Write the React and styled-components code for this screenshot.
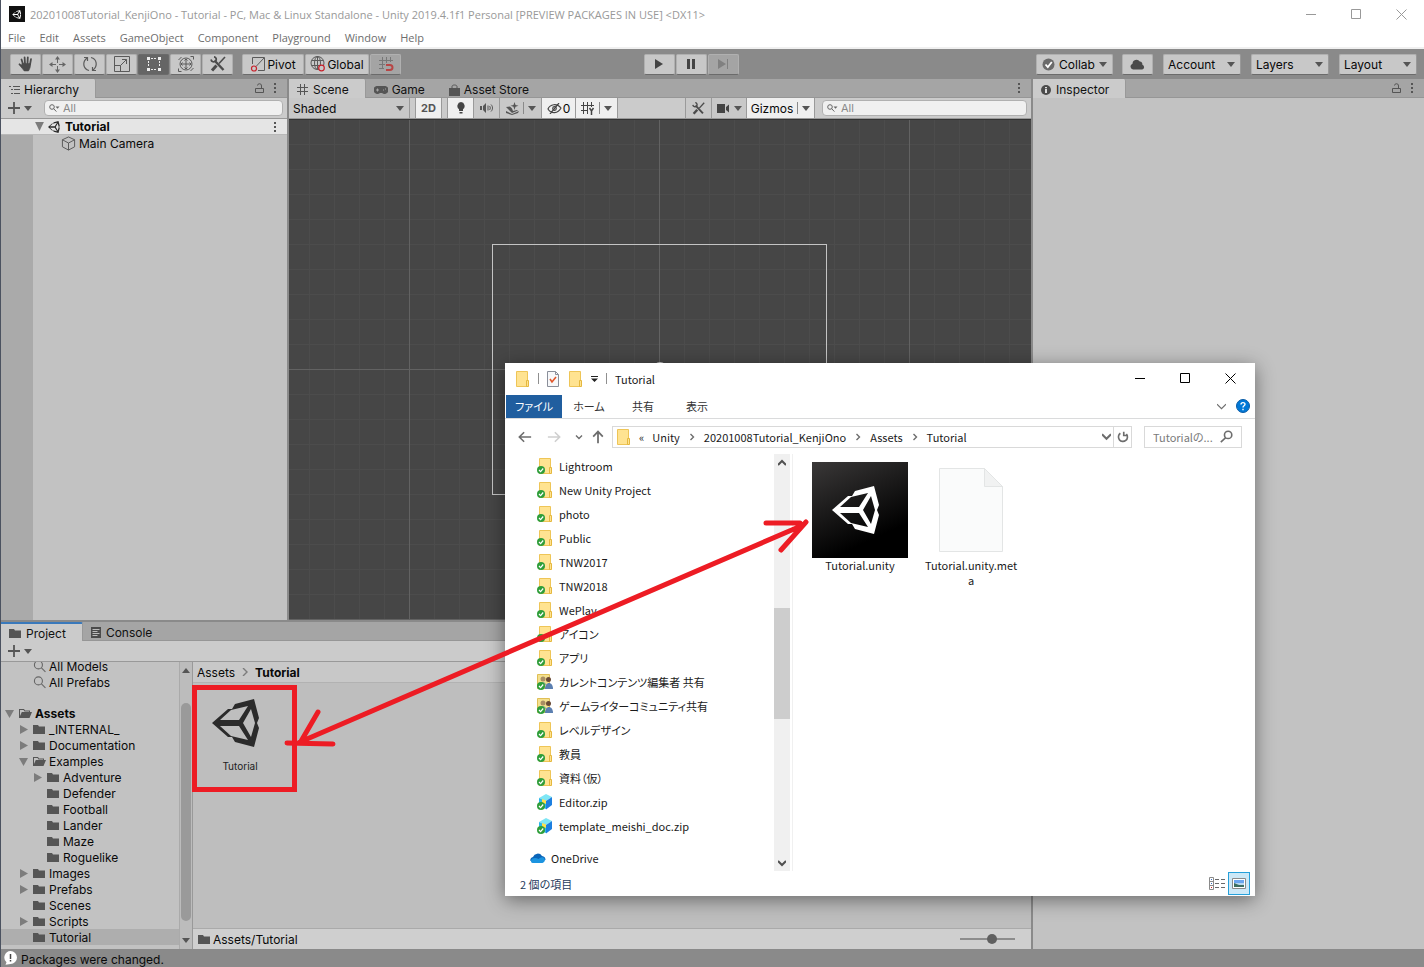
import React, { useState } from "react";
import styled, { createGlobalStyle } from "styled-components";

const GlobalStyle = createGlobalStyle`
  * {
    box-sizing: border-box;
  }
  body {
    margin: 0;
    overflow: hidden;
  }
  button, input, select {
    font: inherit;
    color: inherit;
    margin: 0;
  }
  button {
    padding: 0;
    border: none;
    background: none;
  }
  svg {
    display: block;
    flex-shrink: 0;
  }
`;

const Editor = styled.div`
  position: relative;
  display: flex;
  flex-direction: column;
  height: 100vh;
  overflow: hidden;
  border-left: 1px solid #4b5260;
  background: #8a8a8a;
  font-family: Inter, "Noto Sans CJK JP", sans-serif;
  font-size: 12px;
  color: #090909;
`;

/* ---------- title bar and menu ---------- */

const TitleBar = styled.header`
  display: flex;
  align-items: center;
  height: 28px;
  padding-left: 8px;
  background: #ffffff;
  color: #999999;
  font-family: "Open Sans", sans-serif;
  font-size: 11px;
`;

const TitleText = styled.span`
  flex: 1;
  padding-left: 5px;
  white-space: nowrap;
`;

const AppBadge = styled.span`
  display: grid;
  place-items: center;
  width: 16px;
  height: 16px;
  background: #111111;
`;

const WindowButton = styled.button`
  display: grid;
  place-items: center;
  width: 45px;
  height: ${(props) => props.$height || 28}px;
  color: ${(props) => props.$color || "#999999"};
`;

const MenuBar = styled.nav`
  display: flex;
  align-items: center;
  gap: 14px;
  height: 21px;
  padding: 0 7px;
  background: #ffffff;
  border-bottom: 2px solid #f0f0f0;
  font-family: "Open Sans", sans-serif;
  font-size: 11px;
  color: #6d6d6d;
`;

const MenuItem = styled.button`
  line-height: 18px;
`;

/* ---------- main toolbar ---------- */

const Toolbar = styled.div`
  display: flex;
  align-items: center;
  height: 30px;
  padding: 0 7px 0 9px;
  background: #8a8a8a;
`;

const ButtonGroup = styled.div`
  display: flex;
  gap: 1px;
  margin-right: ${(props) => props.$after || 0}px;
`;

const ToolButton = styled.button`
  display: flex;
  align-items: center;
  justify-content: center;
  gap: ${(props) => props.$gap || 1}px;
  width: ${(props) => props.$width || 31}px;
  height: 21px;
  border: 1px solid ${(props) => (props.$active ? "#6a6a6a" : "#b0b0b0")};
  border-bottom-color: #6b6b6b;
  border-radius: 2px;
  background: ${(props) => (props.$active ? "#656565" : props.$dim ? "#a4a4a4" : "#c8c8c8")};
  color: ${(props) => (props.$active ? "#f0f0f0" : "#090909")};
`;

const CloudButton = styled(ToolButton)`
  margin-left: 9px;
`;

const Spacer = styled.div`
  flex: ${(props) => props.$grow || 1};
`;

const SelectBox = styled.label`
  position: relative;
  display: flex;
  align-items: center;
  width: ${(props) => props.$width}px;
  height: ${(props) => (props.$flat ? 20 : 21)}px;
  margin-left: ${(props) => (props.$flat ? 0 : 10)}px;
  border: ${(props) => (props.$flat ? "none" : "1px solid #b0b0b0")};
  border-bottom: ${(props) => (props.$flat ? "none" : "1px solid #6b6b6b")};
  border-right: 1px solid #999999;
  border-radius: ${(props) => (props.$flat ? 0 : 2)}px;
  background: #c8c8c8;

  select {
    width: 100%;
    height: 100%;
    padding: 0 16px 0 4px;
    border: none;
    background: none;
    appearance: none;
  }
  svg {
    position: absolute;
    right: 5px;
    pointer-events: none;
  }
`;

/* ---------- panels ---------- */

const Workspace = styled.main`
  display: flex;
  flex: 1;
  gap: 2px;
  min-height: 0;
  background: #8a8a8a;
`;

const LeftColumn = styled.div`
  display: flex;
  flex: 1030;
  flex-direction: column;
  gap: 2px;
  min-width: 0;
`;

const UpperRow = styled.div`
  display: flex;
  flex: 541;
  gap: 2px;
  min-height: 0;
`;

const Panel = styled.section`
  display: flex;
  flex: ${(props) => props.$grow || 1};
  flex-direction: column;
  min-width: 0;
  min-height: 0;
  overflow: hidden;
  background: #c2c2c2;
`;

const TabStrip = styled.div`
  display: flex;
  align-items: center;
  height: 19px;
  flex-shrink: 0;
  padding-right: 4px;
  border-bottom: 1px solid #969696;
  background: #a5a5a5;
`;

const Tab = styled.button`
  display: flex;
  align-items: center;
  gap: 4px;
  height: 19px;
  margin-bottom: -1px;
  padding: 2px 16px 0 8px;
  white-space: nowrap;
  color: #111111;
  background: ${(props) => (props.$active ? "#cbcbcb" : "none")};
  border-right: ${(props) => (props.$active ? "1px solid #999999" : "none")};
  border-top: ${(props) => (props.$focused ? "2px solid #3a79bb" : "none")};
  border-radius: 0 2px 0 0;
`;

const IconButton = styled.button`
  display: grid;
  place-items: center;
  width: 16px;
  height: 16px;
  color: #555555;
`;

const PanelBar = styled.div`
  display: flex;
  align-items: center;
  height: 21px;
  flex-shrink: 0;
  border-bottom: 1px solid #999999;
  background: #cbcbcb;
`;

const AddButton = styled.button`
  display: flex;
  align-items: center;
  gap: 4px;
  width: 36px;
  padding-left: 7px;
  color: #555555;
`;

const SearchBox = styled.label`
  display: flex;
  align-items: center;
  gap: 3px;
  flex: 1;
  min-width: 0;
  max-width: 240px;
  height: 16px;
  margin: 0 4px 0 7px;
  padding-left: 4px;
  border: 1px solid #b0b0b0;
  border-radius: 4px;
  background: #f0f0f0;
  color: #5a5a5a;

  input {
    flex: 1;
    min-width: 0;
    padding: 0;
    border: none;
    outline: none;
    background: none;
    font-size: 11px;
    line-height: 14px;
  }
  input::placeholder {
    color: #888888;
    opacity: 1;
  }
`;

/* ---------- hierarchy ---------- */

const HierarchyBody = styled.div`
  flex: 1;
  background: linear-gradient(to right, #aaaaaa 32px, #c2c2c2 32px);
`;

const SceneRow = styled.div`
  display: flex;
  align-items: center;
  gap: 4px;
  height: 16px;
  padding: 0 4px 0 33px;
  border-bottom: 1px solid #b8b8b8;
  background: #e5e5e5;
  font-weight: 700;

  span {
    flex: 1;
  }
`;

const ObjectRow = styled.div`
  display: flex;
  align-items: center;
  gap: 3px;
  height: 16px;
  padding-left: 60px;
`;

/* ---------- scene ---------- */

const SceneButton = styled.button`
  display: flex;
  align-items: center;
  justify-content: center;
  gap: 4px;
  width: ${(props) => props.$width}px;
  height: 20px;
  margin-left: ${(props) => props.$before || 0}px;
  border-right: 1px solid #9a9a9a;
  border-left: ${(props) => (props.$before ? "1px solid #9a9a9a" : "none")};
  background: ${(props) => (props.$on ? "#efefef" : "#c8c8c8")};
  color: ${(props) => (props.$text ? "#090909" : "#555555")};
`;

const Divider = styled.i`
  width: 1px;
  height: 12px;
  background: #8a8a8a;
`;

const TwoD = styled.span`
  font-size: 11px;
  font-weight: 700;
`;

const ZeroCount = styled.span`
  margin-left: -3px;
`;

const SceneSearch = styled(SearchBox)`
  flex: 0 1 205px;
`;

const SceneCanvas = styled.div`
  flex: 1;
  min-height: 0;
  overflow: hidden;
  border-top: 1px solid #333333;
  background-color: #464646;
  background-image:
    linear-gradient(to right, #626262 1px, transparent 1px),
    linear-gradient(to bottom, #626262 1px, transparent 1px),
    linear-gradient(to right, #4c4c4c 1px, transparent 1px),
    linear-gradient(to bottom, #4c4c4c 1px, transparent 1px);
  background-size: 250px 250px, 250px 250px, 25px 25px, 25px 25px;
  background-position: 120px 0, 0 -1px, 20px 0, 0 -1px;
`;

/* ---------- project ---------- */

const ProjectBody = styled.div`
  display: flex;
  flex: 1;
  min-height: 0;
`;

const TreeView = styled.div`
  width: 178px;
  overflow: hidden;
`;

const TreeList = styled.ul`
  margin: -4px 0 0;
  padding: 0;
  list-style: none;
`;

const TreeRow = styled.li`
  display: flex;
  align-items: center;
  gap: 3px;
  height: 16px;
  margin-top: ${(props) => (props.$section ? 15 : 0)}px;
  padding-left: ${(props) => 4 + props.$depth * 14}px;
  background: ${(props) => (props.$selected ? "#aeaeae" : "none")};
  font-weight: ${(props) => (props.$bold ? 700 : 400)};
  white-space: nowrap;
`;

const Arrow = styled.span`
  display: grid;
  align-items: center;
  justify-items: start;
  width: 11px;
  color: #7c7c7c;
`;

const Scroller = styled.div`
  display: flex;
  flex-direction: column;
  align-items: center;
  justify-content: space-between;
  width: 14px;
  padding: 6px 0;
  border-left: 1px solid #aaaaaa;
  border-right: 1px solid #999999;
  background: #bcbcbc;
  color: #555555;
`;

const ScrollThumb = styled.div`
  width: 10px;
  flex: 1;
  margin: 30px 0 17px;
  border-radius: 5px;
  background: #9a9a9a;
`;

const AssetView = styled.div`
  display: flex;
  flex: 1;
  flex-direction: column;
  background: #bebebe;
`;

const Breadcrumb = styled.div`
  display: flex;
  align-items: center;
  gap: 6px;
  height: 21px;
  padding-left: 4px;
  border-bottom: 1px solid #b2b2b2;
  background: #c8c8c8;

  svg {
    color: #7c7c7c;
  }
`;

const AssetGrid = styled.div`
  flex: 1;
  padding: 16px 10px;
`;

const AssetTile = styled.figure`
  display: flex;
  flex-direction: column;
  align-items: center;
  gap: 12px;
  width: 74px;
  margin: 0;
  font-size: 10px;
  line-height: 14px;
  color: #222222;
`;

const AssetFooter = styled.footer`
  display: flex;
  align-items: center;
  gap: 2px;
  height: 21px;
  padding: 0 16px 0 5px;
  border-top: 1px solid #aaaaaa;
  background: #cfcfcf;

  span {
    flex: 1;
  }
`;

const SizeSlider = styled.input`
  width: 55px;
  height: 12px;
  appearance: none;
  background: linear-gradient(#8c8c8c, #8c8c8c) center / 100% 2px no-repeat;

  &::-webkit-slider-thumb {
    appearance: none;
    width: 10px;
    height: 10px;
    border-radius: 50%;
    background: #606060;
  }
`;

const StatusBar = styled.footer`
  display: flex;
  align-items: flex-start;
  gap: 4px;
  height: 18px;
  padding: 2px 0 0 3px;
  overflow: hidden;
  background: #8a8a8a;
  line-height: 18px;
  white-space: nowrap;
`;

/* ---------- floating file explorer ---------- */

const Explorer = styled.section`
  position: absolute;
  top: 363px;
  left: 504px;
  display: flex;
  flex-direction: column;
  width: 750px;
  height: 533px;
  background: #ffffff;
  box-shadow: 0 4px 18px rgba(0, 0, 0, 0.45);
  color: #1a1a1a;
  font-family: "Noto Sans CJK JP", sans-serif;
  font-feature-settings: "palt";
  font-size: 11px;
`;

const ExplorerTitle = styled.div`
  display: flex;
  align-items: center;
  gap: 8px;
  height: 31px;
  padding-left: 9px;
`;

const WindowButtons = styled.div`
  display: flex;
  padding-right: 2px;
`;

const Bar = styled.i`
  width: 1px;
  height: 11px;
  background: #8f8f8f;
`;

const Ribbon = styled.div`
  display: flex;
  align-items: center;
  height: 25px;
  padding: 0 5px 0 1px;
  border-bottom: 1px solid #dadbdc;
`;

const RibbonTab = styled.button`
  width: ${(props) => (props.$file ? 56 : 54)}px;
  height: 23px;
  background: ${(props) => (props.$file ? "#205e9f" : "none")};
  color: ${(props) => (props.$file ? "#ffffff" : "#333333")};
`;

const AddressRow = styled.div`
  display: flex;
  align-items: center;
  height: 35px;
  padding: 0 13px;
  color: #6d6d6d;
`;

const NavButton = styled.button`
  display: grid;
  place-items: center;
  width: ${(props) => props.$width}px;
  height: 20px;
  color: ${(props) => (props.$faded ? "#cfcfcf" : "#6d6d6d")};
`;

const AddressBox = styled.div`
  display: flex;
  align-items: center;
  gap: 8px;
  flex: 1;
  height: 22px;
  margin-right: 12px;
  padding-left: 2px;
  border: 1px solid #d9d9d9;
  color: #1a1a1a;

  > svg {
    color: #6d6d6d;
  }
`;

const RefreshButton = styled.button`
  display: grid;
  place-items: center;
  width: 18px;
  height: 20px;
  margin-left: -6px;
  border-left: 1px solid #d9d9d9;
  color: #6d6d6d;
`;

const ExplorerSearch = styled.label`
  display: flex;
  align-items: center;
  width: 98px;
  height: 22px;
  padding: 0 8px;
  border: 1px solid #d9d9d9;

  input {
    flex: 1;
    min-width: 0;
    padding: 0;
    border: none;
    outline: none;
  }
  input::placeholder {
    color: #7a7a7a;
    opacity: 1;
  }
`;

const ExplorerBody = styled.div`
  display: flex;
  flex: 1;
  min-height: 0;
`;

const FolderList = styled.ul`
  flex: 0 0 269px;
  margin: 0;
  padding: 0;
  list-style: none;
`;

const FolderRow = styled.li`
  display: flex;
  align-items: center;
  gap: ${(props) => (props.$root ? 5 : 6)}px;
  height: 24px;
  margin-top: ${(props) => (props.$root ? 8 : 0)}px;
  padding-left: ${(props) => (props.$root ? 25 : 32)}px;
  white-space: nowrap;
`;

const ExplorerScroll = styled.div`
  display: flex;
  flex-direction: column;
  align-items: center;
  width: 16px;
  padding: 5px 0 4px;
  background: #f0f0f0;
  color: #505050;
`;

const ExplorerThumb = styled.div`
  width: 100%;
  flex: 0 0 111px;
  margin: 141px 0 auto;
  background: #cdcdcd;
`;

const FileArea = styled.div`
  display: flex;
  flex: 1;
  align-items: flex-start;
  gap: 15px;
  margin-left: 2px;
  padding: 8px 19px;
  border-left: 1px solid #f0f0f0;
`;

const FileTile = styled.figure`
  width: 96px;
  margin: 0;
  text-align: center;
  line-height: 15px;
  word-break: break-all;
`;

const FileThumb = styled.div`
  display: grid;
  place-items: center;
  height: 96px;
  background: ${(props) => (props.$dark ? "linear-gradient(155deg, #3a3838, #000000 75%)" : "none")};
`;

const ExplorerStatus = styled.footer`
  display: flex;
  align-items: center;
  gap: 3px;
  height: 25px;
  padding: 0 5px 0 15px;
  color: #1e395b;

  span {
    flex: 1;
  }
`;

const ViewButton = styled.button`
  display: grid;
  place-items: center;
  width: ${(props) => (props.$active ? 22 : 17)}px;
  height: 23px;
  border: ${(props) => (props.$active ? "1px solid #26a0da" : "none")};
  background: ${(props) => (props.$active ? "#cce8f7" : "none")};
`;

const Marks = styled.svg`
  position: absolute;
  inset: 0;
  width: 100%;
  height: 100%;
  pointer-events: none;
`;

/* ---------- icons ---------- */

const UnityLogo = ({ size, color = "#2b2b2b" }) => (
  <svg width={size} height={size} viewBox="4 0 48 48" overflow="visible" fill={color} fillRule="evenodd">
    <path d="M0 24 16 10h4l3-5L42 0l5 19-2 5 2 5-5 19-19-5-3-5h-4ZM8 21h19L36 7 19 11ZM8 27h19l9 14-17-4ZM31 24l8-14 4 14-4 14Z" />
  </svg>
);

const Caret = ({ color = "#555555" }) => (
  <svg width="8" height="5" viewBox="0 0 8 5" fill={color}>
    <path d="M0 0h8L4 5Z" />
  </svg>
);

const Line = ({ size = 16, w = 1, children, color = "currentColor" }) => (
  <svg width={size} height={size} viewBox="0 0 16 16" fill="none" stroke={color} strokeWidth={w}>
    {children}
  </svg>
);

const HandIcon = () => (
  <svg width="16" height="16" viewBox="0 0 16 16" fill="#4b4b4b" stroke="#4b4b4b" strokeLinecap="round">
    <path d="M3.5 3.5 5 8M6.6 1.5 7 7.5M9.8 1.5 9.5 7.5M13 3.2 12 8.5M1.5 8.3 4.2 10.8" strokeWidth="1.8" fill="none" />
    <path d="M4.2 7.5h8.3c.3 3-.5 5-2 7.5H6.2C5 13.5 3.5 11.5 2.5 10Z" strokeWidth=".5" />
  </svg>
);

const MoveIcon = () => (
  <svg width="17" height="17" viewBox="0 0 17 17" fill="#666666">
    <path d="M8.5 0 11 3.5H9V7H8V3.5H6ZM8.5 17 11 13.5H9V10H8v3.5H6ZM0 8.5 3.5 6v2H7v1H3.5v2ZM17 8.5 13.5 6v2H10v1h3.5v2Z" />
  </svg>
);

const RotateIcon = () => (
  <Line color="#5a5a5a" w={1.2}>
    <path d="M7 14.5C1 13 0 6 5 2M2 1.5h3.5V5M9 1.5c6 1.5 7 8.5 2 12.500M14 14.5h-3.5V11" />
  </Line>
);

const ScaleIcon = () => (
  <Line color="#5a5a5a">
    <path d="M.5.5h15v15H.5ZM.5 9.5h6v6M6.5 9.5l6-6M8 3.500h4.500V8" />
  </Line>
);

const RectIcon = () => (
  <svg width="16" height="16" viewBox="0 0 16 16" fill="#eeeeee">
    <path d="M1 1h3v3H1ZM12 1h3v3h-3ZM1 12h3v3H1ZM12 12h3v3h-3Z" />
    <path d="M5 2.5h6M5 13.5h6M2.500 5v6M13.500 5v6" stroke="#eeeeee" strokeDasharray="2 1" />
  </svg>
);

const TransformIcon = () => (
  <Line color="#5a5a5a">
    <circle cx="8" cy="8" r="6" />
    <path d="M8 3v10M3 8h10M6.5 4.5 8 3l1.5 1.5M6.5 11.5 8 13l1.5-1.5M4.5 6.5 3 8l1.5 1.5M11.5 6.5 13 8l-1.5 1.5M12.5.5h3v3M3.5 15.5h-3v-3M.5 4l3-3M12.5 15l3-3" />
  </Line>
);

const ToolsIcon = ({ size = 16 }) => (
  <svg width={size} height={size} viewBox="0 0 16 16" fill="none" stroke="#4b4b4b">
    <path d="M4.5 4.5 13.5 14" strokeWidth="2.4" />
    <path d="M1 3.5c.5 2.5 3 3 4.5 1.5S6 1 4 .8" strokeWidth="1.7" />
    <path d="M15 1 9 7.5" strokeWidth="1.6" />
    <path d="M6.5 9.5 2 14.5" strokeWidth="3" />
  </svg>
);

const PivotIcon = () => (
  <Line color="#5a5a5a">
    <path d="M2.5 8V1.5h12v13H8M6 10.5l8-8.500" />
    <circle cx="4" cy="12.5" r="2.5" stroke="#c8202a" strokeWidth="1.2" />
  </Line>
);

const GlobeIcon = () => (
  <Line color="#5a5a5a">
    <circle cx="7.5" cy="7" r="6.5" />
    <ellipse cx="7.5" cy="7" rx="3" ry="6.5" />
    <path d="M1.5 4.5h12M1.5 9.5h12M7.500.5v13" />
    <circle cx="11.5" cy="12" r="2.8" stroke="#c8202a" strokeWidth="1.2" fill="#c8c8c8" />
  </Line>
);

const SnapIcon = () => (
  <Line color="#777777">
    <path d="M4.5 1v12M8.5 1v6M12.5 1v5M1 4.500h14M1 8.500h6M1 12.500h5" />
    <path d="M8 9h4a2.2 2.2 0 0 1 0 5H8" stroke="#b84545" strokeWidth="2" />
  </Line>
);

const Dots = () => (
  <svg width="2" height="10" viewBox="0 0 2 10" fill="#555555">
    <path d="M0 0h2v2H0ZM0 4h2v2H0ZM0 8h2v2H0Z" />
  </svg>
);

const LockIcon = () => (
  <svg width="9" height="11" viewBox="0 0 9 11" fill="none" stroke="#555555">
    <path d="M.5 5.5h8v4h-8ZM6.500 5V3a2 2 0 0 0-4-.5" />
  </svg>
);

const FolderIcon = ({ open }) => (
  <svg width="13" height="11" viewBox="0 0 13 11" fill="#555555">
    {open ? (
      <path fillRule="evenodd" d="M0 10V1h5l1 1.500h5V4h2l-2.500 6ZM1 8l1.800-4H10v-.5H5.500L4.500 2H1Z" />
    ) : (
      <path d="M0 1h5l1 1.500h6V10H0Z" />
    )}
  </svg>
);

const SearchGlyph = ({ size = 11, w = 1.3 }) => (
  <svg width={size} height={size} viewBox="0 0 12 12" fill="none" stroke="#666666" strokeWidth={w}>
    <circle cx="5" cy="4.5" r="3.7" />
    <path d="m7.800 7.300 3.700 3.700" />
  </svg>
);

const SearchMini = () => (
  <svg width="11" height="8" viewBox="0 0 11 8" fill="none" stroke="#666666">
    <circle cx="3" cy="3" r="2.3" />
    <path d="m4.600 4.600 2.800 3" />
    <path d="M6.500 2.500h4L8.500 4.800Z" fill="#666666" stroke="none" />
  </svg>
);

const GridIcon = () => (
  <svg width="12" height="12" viewBox="0 0 12 12" stroke="#555555">
    <path d="M3.5 0v11M7.5 0v11M0 3.5h11M0 7.5h11" />
  </svg>
);

const CheckBadge = () => (
  <g>
    <circle cx="4" cy="12" r="4" fill="#2f9e3a" />
    <path d="m2 12 1.600 1.600L6.200 10.500" fill="none" stroke="#ffffff" strokeWidth="1.200" />
  </g>
);

const ExplorerFolder = ({ badge }) => (
  <svg width="16" height="16" viewBox="0 0 16 16">
    <path d="M2.500.5h11v15h-11Z" fill="#ffe391" stroke="#eec557" />
    <path d="M12.500 9.500h2v6h-2Z" fill="#ffe391" stroke="#e5b83f" />
    {badge && <CheckBadge />}
  </svg>
);

const SharedFolder = () => (
  <svg width="16" height="16" viewBox="0 0 16 16">
    <path d="M.5.5h12v14H.5Z" fill="#f4e08f" stroke="#e0bf55" />
    <circle cx="6" cy="5" r="2.5" fill="#a98e63" />
    <circle cx="11.500" cy="5.500" r="2.500" fill="#6a4a35" />
    <path d="M3 11c0-4 6-4 6 0Z" fill="#8fae96" />
    <path d="M8 15c0-8 8-8 8 0Z" fill="#5b7fb0" />
    <CheckBadge />
  </svg>
);

const ZipIcon = () => (
  <svg width="16" height="16" viewBox="0 0 16 16">
    <path d="m9 0 6 3-6 4-7-3Z" fill="#7fe6f5" />
    <path d="m2 4 7 3v8l-7-3Z" fill="#2bb6ea" />
    <path d="m9 7 6-4v8l-6 4.500Z" fill="#1c7fe0" />
    <path d="m5 5 4 1.500V10L5 8.500Z" fill="#ffe04a" />
    <CheckBadge />
  </svg>
);

const CloudIcon = () => (
  <svg width="16" height="12" viewBox="0 0 16 12">
    <path d="M3 5a5 5 0 0 1 9-1 4 4 0 0 1 3.500 4L8 9H.500A3 3 0 0 1 3 5Z" fill="#0a64b8" />
    <path d="M2.500 11h10a3 3 0 0 0 1-5.500C11 4.500 9.500 6 8.500 7 6 5.500 2 5.500 1 8.500A2 2 0 0 0 2.500 11Z" fill="#1c94e0" />
  </svg>
);

const Chevron = ({ d, w = 1.4, size = 8 }) => (
  <svg width={size} height={size} viewBox="0 0 8 8" fill="none" stroke="currentColor" strokeWidth={w}>
    <path d={d} />
  </svg>
);

const WindowGlyph = ({ kind }) => (
  <svg width="11" height="11" viewBox="0 0 11 11" fill="none" stroke="currentColor">
    {kind === "Minimize" && <path d="M0 5.500h10" />}
    {kind === "Maximize" && <path d="M.5.5h9v9H.5Z" />}
    {kind === "Close" && <path d="m.5.5 10 10M10.5.5l-10 10" />}
  </svg>
);

const QuickCheckIcon = () => (
  <svg width="12" height="16" viewBox="0 0 12 16" fill="none">
    <path d="M.5.5h8l3 3v12H.5Z" fill="#f7f8fa" stroke="#8a8f9a" />
    <path d="M8.500.5v3h3" stroke="#8a8f9a" />
    <path d="m3 8 2 3 4-5" stroke="#e2562a" strokeWidth="1.600" />
  </svg>
);

/* ---------- data ---------- */

const menus = ["File", "Edit", "Assets", "GameObject", "Component", "Playground", "Window", "Help"];

const tools = [
  { name: "Hand", icon: <HandIcon /> },
  { name: "Move", icon: <MoveIcon /> },
  { name: "Rotate", icon: <RotateIcon /> },
  { name: "Scale", icon: <ScaleIcon /> },
  { name: "Rect", icon: <RectIcon /> },
  { name: "Transform", icon: <TransformIcon /> },
  { name: "Custom", icon: <ToolsIcon /> },
];

const projectTree = [
  { name: "All Models", depth: 1, search: true },
  { name: "All Prefabs", depth: 1, search: true },
  { name: "Assets", depth: 0, arrow: "open", bold: true, section: true },
  { name: "_INTERNAL_", depth: 1, arrow: "closed" },
  { name: "Documentation", depth: 1, arrow: "closed" },
  { name: "Examples", depth: 1, arrow: "open" },
  { name: "Adventure", depth: 2, arrow: "closed" },
  { name: "Defender", depth: 2 },
  { name: "Football", depth: 2 },
  { name: "Lander", depth: 2 },
  { name: "Maze", depth: 2 },
  { name: "Roguelike", depth: 2 },
  { name: "Images", depth: 1, arrow: "closed" },
  { name: "Prefabs", depth: 1, arrow: "closed" },
  { name: "Scenes", depth: 1 },
  { name: "Scripts", depth: 1, arrow: "closed" },
  { name: "Tutorial", depth: 1, selected: true },
  { name: "Packages", depth: 0, arrow: "closed", bold: true },
];

const explorerFolders = [
  { name: "Lightroom" },
  { name: "New Unity Project" },
  { name: "photo" },
  { name: "Public" },
  { name: "TNW2017" },
  { name: "TNW2018" },
  { name: "WePlay" },
  { name: "アイコン" },
  { name: "アプリ" },
  { name: "カレントコンテンツ編集者 共有", type: "shared" },
  { name: "ゲームライターコミュニティ共有", type: "shared" },
  { name: "レベルデザイン" },
  { name: "教員" },
  { name: "資料（仮）" },
  { name: "Editor.zip", type: "zip" },
  { name: "template_meishi_doc.zip", type: "zip" },
];

const windowKinds = ["Minimize", "Maximize", "Close"];

/* ---------- components ---------- */

function ToolbarSelect({ label, width, flat }) {
  return (
    <SelectBox $width={width} $flat={flat}>
      <select aria-label={label} defaultValue={label}>
        <option>{label}</option>
      </select>
      <Caret />
    </SelectBox>
  );
}

function MainToolbar() {
  const [tool, setTool] = useState("Rect");

  return (
    <Toolbar>
      <ButtonGroup $after={9}>
        {tools.map((item) => (
          <ToolButton
            key={item.name}
            aria-label={item.name}
            $active={tool === item.name}
            onClick={() => setTool(item.name)}
          >
            {item.icon}
          </ToolButton>
        ))}
      </ButtonGroup>
      <ButtonGroup>
        <ToolButton $width={62}><PivotIcon />Pivot</ToolButton>
        <ToolButton $width={64}><GlobeIcon />Global</ToolButton>
        <ToolButton $dim aria-label="Snap"><SnapIcon /></ToolButton>
      </ButtonGroup>
      <Spacer $grow={243} />
      <ButtonGroup>
        <ToolButton aria-label="Play">
          <svg width="10" height="10" viewBox="0 0 10 10" fill="#444444"><path d="M1 0v10l8-5Z" /></svg>
        </ToolButton>
        <ToolButton aria-label="Pause">
          <svg width="8" height="10" viewBox="0 0 8 10" fill="#444444"><path d="M0 0h3v10H0ZM5 0h3v10H5Z" /></svg>
        </ToolButton>
        <ToolButton $dim aria-label="Step">
          <svg width="11" height="10" viewBox="0 0 11 10" fill="#808080"><path d="M0 0v10l8-5ZM9 0h1v10H9Z" /></svg>
        </ToolButton>
      </ButtonGroup>
      <Spacer $grow={298} />
      <ToolButton $width={77} $gap={4}>
        <svg width="13" height="13" viewBox="0 0 13 13">
          <circle cx="6.5" cy="6.5" r="6" fill="#6a6a6a" />
          <path d="m3.500 6.500 2.300 2.500 4-5" fill="none" stroke="#ffffff" strokeWidth="1.800" />
        </svg>
        Collab
        <Caret />
      </ToolButton>
      <CloudButton aria-label="Services">
        <svg width="15" height="11" viewBox="0 0 15 11" fill="#4b4b4b">
          <path d="M3 10.500a3 3 0 0 1-.5-5.800A4 4 0 0 1 9.800 2.500a3 3 0 0 1 2.600 3.200 2.500 2.500 0 0 1-.2 4.800Z" />
        </svg>
      </CloudButton>
      <ToolbarSelect label="Account" width={78} />
      <ToolbarSelect label="Layers" width={78} />
      <ToolbarSelect label="Layout" width={78} />
    </Toolbar>
  );
}

function Hierarchy() {
  return (
    <Panel $grow={286}>
      <TabStrip>
        <Tab $active>
          <svg width="11" height="10" viewBox="0 0 11 10" stroke="#555555"><path d="M0 1.500h2M4 1.500h7M2 4.500h2M5 4.500h6M2 8.500h2M5 8.500h6" /></svg>
          Hierarchy
        </Tab>
        <Spacer />
        <IconButton aria-label="Lock"><LockIcon /></IconButton>
        <IconButton aria-label="Menu"><Dots /></IconButton>
      </TabStrip>
      <PanelBar>
        <AddButton aria-label="Create">
          <Line size={12} w={2.4}><path d="M8 0v16M0 8h16" /></Line>
          <Caret />
        </AddButton>
        <SearchBox>
          <SearchMini />
          <input placeholder="All" aria-label="Search hierarchy" />
        </SearchBox>
      </PanelBar>
      <HierarchyBody>
        <SceneRow>
          <svg width="11" height="9" viewBox="0 0 10 8" fill="#7c7c7c"><path d="M1 0h8L5 8Z" /></svg>
          <UnityLogo size={12} />
          <span>Tutorial</span>
          <IconButton aria-label="Scene menu"><Dots /></IconButton>
        </SceneRow>
        <ObjectRow>
          <Line size={15} color="#555555">
            <path d="m8 1 6.500 3v7.500L8 15l-6.500-3.500V4ZM1.500 4 8 7.500 14.500 4M8 7.500V15" />
          </Line>
          Main Camera
        </ObjectRow>
      </HierarchyBody>
    </Panel>
  );
}

function SceneView() {
  return (
    <Panel $grow={742}>
      <TabStrip>
        <Tab $active><GridIcon />Scene</Tab>
        <Tab>
          <svg width="14" height="8" viewBox="0 0 14 8" fill="#555555" fillRule="evenodd">
            <path d="M4 0h6a4 4 0 1 1-2 7H6a4 4 0 1 1-2-7ZM2 3.500h1V2.500h1v1h1v1H4v1H3v-1H2ZM9 3.500h1v1H9ZM11 2.500h1v1h-1Z" />
          </svg>
          Game
        </Tab>
        <Tab>
          <svg width="11" height="12" viewBox="0 0 11 12" fill="#555555">
            <path d="M0 4h11v8H0Z" />
            <path d="M3 6V2.500C3 .5 8 .5 8 2.500V6" fill="none" stroke="#555555" />
          </svg>
          Asset Store
        </Tab>
        <Spacer />
        <IconButton aria-label="Menu"><Dots /></IconButton>
      </TabStrip>
      <PanelBar>
        <ToolbarSelect label="Shaded" width={121} flat />
        <SceneButton $width={27} $before={5} $on><TwoD>2D</TwoD></SceneButton>
        <SceneButton $width={27} $before={5} $on aria-label="Lighting">
          <svg width="8" height="12" viewBox="0 0 8 12" fill="#444444"><path d="M4 0a4 4 0 0 1 2 7.200V9H2V7.200A4 4 0 0 1 4 0ZM2.500 10h3v1.500h-3Z" /></svg>
        </SceneButton>
        <SceneButton $width={26} aria-label="Audio">
          <svg width="13" height="10" viewBox="0 0 13 10" fill="#555555">
            <path d="M0 3h2v4H0ZM3 3l3-3v10L3 7Z" />
            <path d="M8 2.500v5M9.500 3c1 1 1 3 0 4M11 1.500c2 2 2 5 0 7" fill="none" stroke="#555555" />
          </svg>
        </SceneButton>
        <SceneButton $width={42} aria-label="Effects">
          <svg width="13" height="13" viewBox="0 0 13 13" fill="#555555">
            <path d="M8.500 0 9.500 3l3 .8-3 1L8.500 8l-1-3.200-3-1 3-.8ZM0 5l4-.5 2 2 1 2.500L11 8l1 .5L6 11ZM0 9l6 3 7-3-1 2-6 2-6-2Z" />
          </svg>
          <Divider />
          <Caret />
        </SceneButton>
        <SceneButton $width={34} $on $text>
          <svg width="15" height="11" viewBox="0 0 15 11" fill="none" stroke="#444444" strokeWidth="1.200">
            <path d="M1 6c2-5 9-6 13-1-3 6-10 6-13 1ZM3 11 12 0" />
            <circle cx="7.500" cy="5.500" r="1.800" />
          </svg>
          <ZeroCount>0</ZeroCount>
        </SceneButton>
        <SceneButton $width={42} $on aria-label="Grid">
          <svg width="14" height="13" viewBox="0 0 14 13" fill="none" stroke="#444444">
            <path d="M2.500 0v12M6.500 0v12M10.500 0v5M0 3.500h13M0 8.500h7" />
            <path d="m8.500 6 2 3 2-3M10.500 9v4" strokeWidth="1.500" />
          </svg>
          <Divider />
          <Caret />
        </SceneButton>
        <Spacer />
        <SceneButton $width={27} $before={1} aria-label="Tools"><ToolsIcon size={13} /></SceneButton>
        <SceneButton $width={35} aria-label="Camera">
          <svg width="13" height="9" viewBox="0 0 13 9" fill="#444444"><path d="M0 0h8v9H0ZM9 3l3-2.500v8L9 6Z" /></svg>
          <Caret />
        </SceneButton>
        <SceneButton $width={68} $on $text>Gizmos<Divider /><Caret /></SceneButton>
        <SceneSearch>
          <SearchMini />
          <input placeholder="All" aria-label="Search scene" />
        </SceneSearch>
      </PanelBar>
      <SceneCanvas>
        <svg width="742" height="500" fill="none">
          <rect x="203.5" y="124.5" width="334" height="250" stroke="#c4c4c4" />
          <circle cx="371" cy="249" r="7" fill="#c8c8c8" />
        </svg>
      </SceneCanvas>
    </Panel>
  );
}

function Inspector() {
  return (
    <Panel $grow={391}>
      <TabStrip>
        <Tab $active>
          <svg width="11" height="10" viewBox="0 0 11 10">
            <circle cx="5" cy="5" r="5" fill="#4b4b4b" />
            <path d="M4 2h2v1.300H4ZM4 4h2v4H4Z" fill="#dddddd" />
          </svg>
          Inspector
        </Tab>
        <Spacer />
        <IconButton aria-label="Lock"><LockIcon /></IconButton>
        <IconButton aria-label="Menu"><Dots /></IconButton>
      </TabStrip>
    </Panel>
  );
}

function ProjectTreeRow({ item }) {
  return (
    <TreeRow $depth={item.depth} $bold={item.bold} $selected={item.selected} $section={item.section}>
      <Arrow>
        {item.arrow && (
          <svg width="9" height="9" viewBox="0 0 9 9" fill="currentColor">
            <path d={item.arrow === "open" ? "M0 1h9L4.500 9Z" : "M1 0v9l8-4.500Z"} />
          </svg>
        )}
      </Arrow>
      {item.search ? <SearchGlyph size={13} w={1} /> : <FolderIcon open={item.arrow === "open"} />}
      {item.name}
    </TreeRow>
  );
}

function Project() {
  const [size, setSize] = useState(60);

  return (
    <Panel $grow={327}>
      <TabStrip>
        <Tab $active $focused><FolderIcon />Project</Tab>
        <Tab>
          <svg width="11" height="11" viewBox="0 0 11 11"><path d="M0 0h10v11H0Z" fill="#4b4b4b" /><path d="M1.500 2.500h7M1.500 4.500h5M1.500 6.500h7M1.500 8.500h5" stroke="#bbbbbb" /></svg>
          Console
        </Tab>
      </TabStrip>
      <PanelBar>
        <AddButton aria-label="Create asset">
          <Line size={12} w={2.4}><path d="M8 0v16M0 8h16" /></Line>
          <Caret />
        </AddButton>
      </PanelBar>
      <ProjectBody>
        <TreeView>
          <TreeList>
            {projectTree.map((item) => (
              <ProjectTreeRow key={item.name + item.depth} item={item} />
            ))}
          </TreeList>
        </TreeView>
        <Scroller>
          <svg width="8" height="5" viewBox="0 0 8 5" fill="currentColor"><path d="M0 5h8L4 0Z" /></svg>
          <ScrollThumb />
          <Caret />
        </Scroller>
        <AssetView>
          <Breadcrumb>
            Assets
            <Chevron d="m2 0 4 4-4 4" w={1.4} />
            <strong>Tutorial</strong>
          </Breadcrumb>
          <AssetGrid>
            <AssetTile>
              <UnityLogo size={48} />
              <figcaption>Tutorial</figcaption>
            </AssetTile>
          </AssetGrid>
          <AssetFooter>
            <FolderIcon />
            <span>Assets/Tutorial</span>
            <SizeSlider
              type="range"
              aria-label="Icon size"
              value={size}
              onChange={(e) => setSize(Number(e.target.value))}
            />
          </AssetFooter>
        </AssetView>
      </ProjectBody>
    </Panel>
  );
}

function FolderTypeIcon({ type }) {
  if (type === "shared") return <SharedFolder />;
  if (type === "zip") return <ZipIcon />;
  return <ExplorerFolder badge />;
}

function FileExplorer() {
  return (
    <Explorer>
      <ExplorerTitle>
        <ExplorerFolder />
        <Bar />
        <QuickCheckIcon />
        <ExplorerFolder />
        <svg width="7" height="6" viewBox="0 0 7 6" fill="#222222"><path d="M0 0h7v1H0ZM0 2.500h7L3.500 6Z" /></svg>
        <Bar />
        Tutorial
        <Spacer />
        <WindowButtons>
          {windowKinds.map((kind) => (
            <WindowButton key={kind} aria-label={kind} $height={31} $color="#000000">
              <WindowGlyph kind={kind} />
            </WindowButton>
          ))}
        </WindowButtons>
      </ExplorerTitle>
      <Ribbon>
        <RibbonTab $file>ファイル</RibbonTab>
        <RibbonTab>ホーム</RibbonTab>
        <RibbonTab>共有</RibbonTab>
        <RibbonTab>表示</RibbonTab>
        <Spacer />
        <NavButton $width={30} aria-label="Expand ribbon"><Chevron d="m0 2 4 4 4-4" w={1} size={9} /></NavButton>
        <svg width="14" height="14" viewBox="0 0 14 14">
          <circle cx="7" cy="7" r="6.5" fill="#0078d7" stroke="#0a5ba5" />
          <path d="M5 5.500c0-2.500 4-2.500 4-.2C9 6.800 7 6.800 7 8.500M7 9.800v1.500" fill="none" stroke="#ffffff" strokeWidth="1.400" />
        </svg>
      </Ribbon>
      <AddressRow>
        <NavButton $width={14} aria-label="Back"><Line size={14} w={1.8}><path d="M15 8H2M7 2.500 1.500 8 7 13.500" /></Line></NavButton>
        <NavButton $width={43} $faded aria-label="Forward"><Line size={14} w={1.8}><path d="M1 8h13M9 2.500 14.500 8 9 13.500" /></Line></NavButton>
        <NavButton $width={8} aria-label="Recent"><Chevron d="m1 2.500 3 3 3-3" /></NavButton>
        <NavButton $width={29} aria-label="Up"><Line size={14} w={2}><path d="M8 15V2M2.500 7.500 8 1.800l5.500 5.700" /></Line></NavButton>
        <AddressBox>
          <ExplorerFolder />
          <span>«</span>
          <span>Unity</span>
          <Chevron d="m2.500 1 3 3-3 3" />
          <span>20201008Tutorial_KenjiOno</span>
          <Chevron d="m2.500 1 3 3-3 3" />
          <span>Assets</span>
          <Chevron d="m2.500 1 3 3-3 3" />
          <span>Tutorial</span>
          <Spacer />
          <Chevron d="m0 2 4 4 4-4" w={1.8} size={9} />
          <RefreshButton aria-label="Refresh">
            <Line size={12} w={2.2}><path d="M12.500 4a6 6 0 1 1-8-1M9 1v5h5.500" /></Line>
          </RefreshButton>
        </AddressBox>
        <ExplorerSearch>
          <input placeholder="Tutorialの..." aria-label="Tutorialの検索" />
          <Line size={13} w={2}><circle cx="10" cy="6" r="4.500" /><path d="M7 9.500 1 15" /></Line>
        </ExplorerSearch>
      </AddressRow>
      <ExplorerBody>
        <FolderList>
          {explorerFolders.map((folder) => (
            <FolderRow key={folder.name}>
              <FolderTypeIcon type={folder.type} />
              {folder.name}
            </FolderRow>
          ))}
          <FolderRow $root><CloudIcon />OneDrive</FolderRow>
        </FolderList>
        <ExplorerScroll>
          <Chevron d="m0 6 4-4 4 4" w={2} />
          <ExplorerThumb />
          <Chevron d="m0 2 4 4 4-4" w={2} />
        </ExplorerScroll>
        <FileArea>
          <FileTile>
            <FileThumb $dark><UnityLogo size={48} color="#ffffff" /></FileThumb>
            <figcaption>Tutorial.unity</figcaption>
          </FileTile>
          <FileTile>
            <FileThumb>
              <svg width="64" height="84" viewBox="0 0 64 84" fill="#fafbfb" stroke="#e3e5e5">
                <path d="M.5.5h45l18 18v65H.5Z" />
                <path d="M45.500.5v18h18Z" fill="#f1f2f2" />
              </svg>
            </FileThumb>
            <figcaption>Tutorial.unity.meta</figcaption>
          </FileTile>
        </FileArea>
      </ExplorerBody>
      <ExplorerStatus>
        <span>2 個の項目</span>
        <ViewButton aria-label="Details">
          <svg width="16" height="13" viewBox="0 0 16 13" fill="none" stroke="#8a8a8a">
            <path d="M.5.5h4v12h-4ZM.5 4.500h4M.5 8.500h4" />
            <path d="M6 2.500h4M12 2.500h4M6 6.500h4M12 6.500h4M6 10.500h4M12 10.500h4" stroke="#6a6a6a" />
            <path d="M2 10.500h1" stroke="#d02020" />
            <path d="M2 2.500h1M2 6.500h1" stroke="#3a70c0" />
          </svg>
        </ViewButton>
        <ViewButton $active aria-label="Large icons">
          <svg width="14" height="11" viewBox="0 0 14 11">
            <path d="M.5.5h13v10H.5Z" fill="#ffffff" stroke="#8a8a8a" />
            <path d="M2 2h10v3H2Z" fill="#6aa5f0" />
            <path d="M2 5h10v4H2Z" fill="#b8d8f0" />
            <path d="M2 5l5 2h5v2H2Z" fill="#3c6e62" />
          </svg>
        </ViewButton>
      </ExplorerStatus>
    </Explorer>
  );
}

function App() {
  return (
    <>
      <GlobalStyle />
      <Editor>
        <TitleBar>
          <AppBadge><UnityLogo size={9} color="#ffffff" /></AppBadge>
          <TitleText>
            20201008Tutorial_KenjiOno - Tutorial - PC, Mac &amp; Linux Standalone - Unity 2019.4.1f1 Personal [PREVIEW PACKAGES IN USE] &lt;DX11&gt;
          </TitleText>
          {windowKinds.map((kind) => (
            <WindowButton key={kind} aria-label={kind}>
              <WindowGlyph kind={kind} />
            </WindowButton>
          ))}
        </TitleBar>
        <MenuBar>
          {menus.map((menu) => (
            <MenuItem key={menu}>{menu}</MenuItem>
          ))}
        </MenuBar>
        <MainToolbar />
        <Workspace>
          <LeftColumn>
            <UpperRow>
              <Hierarchy />
              <SceneView />
            </UpperRow>
            <Project />
          </LeftColumn>
          <Inspector />
        </Workspace>
        <StatusBar>
          <svg width="13" height="14" viewBox="0 0 13 14">
            <path d="M6.500 0a6.500 6.500 0 1 1 0 13l-5 .8 1-2.500A6.500 6.500 0 0 1 6.500 0Z" fill="#ffffff" />
            <path d="M6.500 3v5M6.500 9v1.500" stroke="#444444" strokeWidth="1.500" />
          </svg>
          Packages were changed.
        </StatusBar>
        <FileExplorer />
        <Marks fill="none" stroke="#ed1c24" strokeWidth="5" strokeLinecap="round">
          <rect x="193.5" y="687.5" width="100" height="102" strokeLinecap="butt" />
          <path d="M299 742 800 526M286 743l46 1M317 712l-18 31M765 523h34M805 522l-25 28" />
        </Marks>
      </Editor>
    </>
  );
}

export default App;
